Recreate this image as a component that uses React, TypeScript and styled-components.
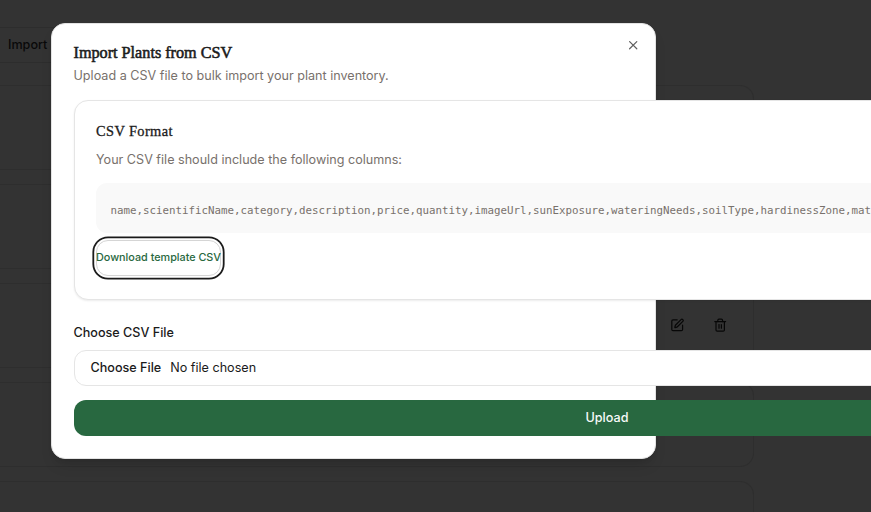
import React from "react";
import styled, { createGlobalStyle } from "styled-components";
import { SquarePen, Trash2, X } from "lucide-react";

const GlobalStyle = createGlobalStyle`
  *, *::before, *::after { box-sizing: border-box; }
  html, body { margin: 0; height: 100%; overflow: hidden; background: #fff; }
  body { font-family: Inter, "Liberation Sans", sans-serif; color: #1b1b1b; }
  button { font: inherit; margin: 0; cursor: pointer; }
  h2, h3, p, pre { margin: 0; }
`;

const Screen = styled.div`
  position: relative;
  width: 871px;
  height: 512px;
  overflow: hidden;
  background: #333333;
`;

const Inventory = styled.div`
  display: flex;
  flex-direction: column;
  width: 754px;
  padding-top: 27px;
`;

const Toolbar = styled.div`
  height: 36px;
  width: 200px;
  padding: 0 0 2px 8px;
  border: solid #2d2d2d;
  border-width: 1px 0;
  display: flex;
  align-items: center;
  font-size: 12.6px;
  font-weight: 500;
  color: #090909;
`;

const PlantList = styled.div`
  display: flex;
  flex-direction: column;
  gap: 14px;
  margin-top: 22px;
`;

const PlantCard = styled.div`
  height: 85px;
  flex: none;
  display: flex;
  align-items: center;
  justify-content: flex-end;
  gap: 28px;
  padding-right: 26px;
  border: 1px solid #2e2e2e;
  border-left: 0;
  border-radius: 0 14px 14px 0;
  color: #070707;
`;

const Dialog = styled.section`
  position: absolute;
  left: 51px;
  top: 23px;
  width: 605px;
  height: 436px;
  padding: 19px 21.5px;
  border: 1px solid #e3e3e3;
  border-radius: 14px;
  background: #fff;
  box-shadow: 0 9px 14px -3px rgba(0, 0, 0, 0.12), 0 4px 6px -4px rgba(0, 0, 0, 0.12);
`;

const DialogTitle = styled.h2`
  font: 400 16.2px/20px "Liberation Serif", serif;
  -webkit-text-stroke: 0.55px #1b1b1b;
  white-space: nowrap;
`;

const Muted = styled.p`
  font-size: 12.6px;
  line-height: 18px;
  color: #78716c;
  white-space: nowrap;
`;

const Description = styled(Muted)`
  margin-top: 4px;
`;

const CloseButton = styled.button`
  position: absolute;
  top: 14px;
  right: 15px;
  display: flex;
  padding: 0;
  border: 0;
  background: none;
  color: #5f5f5f;
`;

const Content = styled.div`
  display: flex;
  flex-direction: column;
  width: 1067px;
  margin-top: 15px;
`;

const FormatCard = styled.div`
  height: 200px;
  padding: 20px 21.5px 0;
  border: 1px solid #e5e5e5;
  border-radius: 14px;
  background: #fff;
  box-shadow: 0 1px 2px rgba(0, 0, 0, 0.08);
`;

const CardTitle = styled.h3`
  font: 400 14.4px/20px "Liberation Serif", serif;
  -webkit-text-stroke: 0.3px #1b1b1b;
  letter-spacing: 0.4px;
  white-space: nowrap;
`;

const CardText = styled(Muted)`
  margin-top: 10px;
`;

const Columns = styled.pre`
  height: 50px;
  margin-top: 14px;
  padding: 20px 14.4px 0;
  border-radius: 11px;
  background: #f9f9f9;
  color: #78716c;
  font: 10.8px/16px "DejaVu Sans Mono", monospace;
`;

const TemplateButton = styled.button`
  display: flex;
  align-items: center;
  justify-content: center;
  width: 125px;
  height: 36px;
  margin-top: 7px;
  padding: 0 0 1px;
  border: 1px solid #d5d5d5;
  border-radius: 12px;
  background: #fff;
  box-shadow: 0 0 0 1.8px #fff, 0 0 0 3.6px #1b1b1b;
  color: #286840;
  font-size: 10.8px;
  font-weight: 500;
  white-space: nowrap;
`;

const Label = styled.label`
  margin-top: 24px;
  font-size: 12.6px;
  font-weight: 500;
  line-height: 18px;
`;

const FileField = styled.div`
  display: flex;
  align-items: center;
  gap: 9px;
  height: 36px;
  margin-top: 8px;
  padding: 0 16px 2px;
  border: 1px solid #e5e5e5;
  border-radius: 12px;
  background: #fff;
  font-size: 12.6px;
`;

const ChooseButton = styled.button`
  padding: 0;
  border: 0;
  background: none;
  color: inherit;
  font-weight: 500;
`;

const UploadButton = styled.button`
  height: 36px;
  margin-top: 14px;
  padding: 0 0 2px;
  border: 0;
  border-radius: 12px;
  background: #286840;
  color: #f8faf9;
  font-size: 12.6px;
  font-weight: 500;
`;

const columns =
  "name,scientificName,category,description,price,quantity,imageUrl,sunExposure,wateringNeeds,soilType,hardinessZone,matureSize";

const plants = [
  { id: 1, actions: false },
  { id: 2, actions: false },
  { id: 3, actions: true },
  { id: 4, actions: false },
  { id: 5, actions: false },
];

export default function App() {
  return (
    <>
      <GlobalStyle />
      <Screen>
        <Inventory>
          <Toolbar>Import</Toolbar>
          <PlantList>
            {plants.map((plant) => (
              <PlantCard key={plant.id}>
                {plant.actions && (
                  <>
                    <SquarePen size={14.4} strokeWidth={2} />
                    <Trash2 size={14.4} strokeWidth={2} />
                  </>
                )}
              </PlantCard>
            ))}
          </PlantList>
        </Inventory>
        <Dialog role="dialog" aria-modal="true">
          <DialogTitle>Import Plants from CSV</DialogTitle>
          <Description>Upload a CSV file to bulk import your plant inventory.</Description>
          <CloseButton aria-label="Close">
            <X size={14.4} strokeWidth={2} />
          </CloseButton>
          <Content>
            <FormatCard>
              <CardTitle>CSV Format</CardTitle>
              <CardText>Your CSV file should include the following columns:</CardText>
              <Columns>{columns}</Columns>
              <TemplateButton>Download template CSV</TemplateButton>
            </FormatCard>
            <Label>Choose CSV File</Label>
            <FileField>
              <ChooseButton>Choose File</ChooseButton>
              <span>No file chosen</span>
            </FileField>
            <UploadButton>Upload</UploadButton>
          </Content>
        </Dialog>
      </Screen>
    </>
  );
}
